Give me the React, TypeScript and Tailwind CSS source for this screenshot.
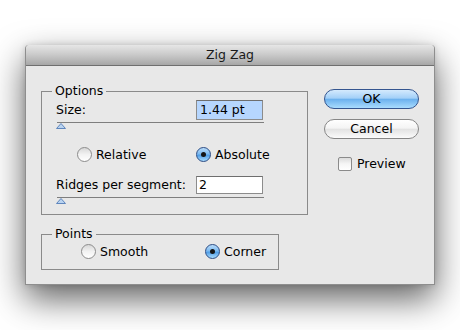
import React from "react";

function Radio({ checked, label }: { checked: boolean; label: string }) {
  return (
    <div className="flex items-center gap-[4px] h-[15px]">
      {checked ? (
        <span className="w-[15px] h-[15px] rounded-full border border-[#2b4c85] bg-[linear-gradient(to_bottom,#b9dcfa_0%,#7dbaf0_45%,#4f9de6_55%,#a6dafd_100%)] flex items-center justify-center shrink-0">
          <span className="w-[5px] h-[5px] rounded-full bg-[#151515]" />
        </span>
      ) : (
        <span className="w-[15px] h-[15px] rounded-full border border-[#8c8c8c] bg-[linear-gradient(to_bottom,#d8d8d8_0%,#f2f2f2_50%,#ffffff_100%)] shrink-0" />
      )}
      <span className="leading-[15px]">{label}</span>
    </div>
  );
}

function Slider() {
  return (
    <div className="flex flex-col">
      <div className="h-[1px] w-[207px] bg-[#7e7e7e] ml-[1px]" />
      <svg width="10" height="6" viewBox="0 0 10 6" className="block">
        <polygon points="5,0.5 9.5,5.5 0.5,5.5" fill="#b9d3f0" stroke="#5f86bd" strokeWidth="1" />
      </svg>
    </div>
  );
}

export default function App() {
  return (
    <div className="w-[460px] h-[330px] bg-white pt-[45px] pl-[25px] font-['DejaVu_Sans',sans-serif] text-[12.5px] text-black">
      <div className="w-[410px] h-[240px] flex flex-col bg-[#e8e8e8] rounded-t-[4px] border-x border-b border-[#8e8e8e] shadow-[0_14px_34px_rgba(0,0,0,0.62),0_0_6px_rgba(0,0,0,0.15)]">
        <div className="h-[21px] shrink-0 rounded-t-[4px] border-b border-[#6f6f6f] bg-[linear-gradient(to_bottom,#e6e6e6_0%,#c9c9c9_50%,#a7a7a7_100%)] flex items-center justify-center text-[12.5px] text-[#1a1a1a]">
          Zig Zag
        </div>
        <div className="flex flex-row">
          <div className="pl-[15px] pt-[25px] flex flex-col">
            <div className="relative w-[267px] border border-[#8a8a8a] pl-[14px] pt-[8px] pb-[10px] flex flex-col">
              <span className="absolute -top-[9px] left-[10px] h-[16px] leading-[16px] px-[3px] bg-[#e8e8e8]">
                Options
              </span>
              <div className="flex items-center h-[20px]">
                <span className="w-[140px]">Size:</span>
                <div className="w-[67px] h-[20px] border border-[#8c8c8c] border-t-[#6e6e6e] bg-[#b6d6fe] pl-[3px] flex items-center">
                  1.44 pt
                </div>
              </div>
              <div className="mt-[2px]">
                <Slider />
              </div>
              <div className="flex items-center mt-[18px]">
                <div className="w-[140px] pl-[21px]">
                  <Radio checked={false} label="Relative" />
                </div>
                <Radio checked={true} label="Absolute" />
              </div>
              <div className="flex items-center h-[18px] mt-[14px]">
                <span className="w-[140px]">Ridges per segment:</span>
                <div className="w-[67px] h-[18px] border border-[#8c8c8c] border-t-[#6e6e6e] bg-white pl-[2px] flex items-center">
                  2
                </div>
              </div>
              <div className="mt-[3px]">
                <Slider />
              </div>
            </div>
            <div className="relative mt-[19px] w-[238px] border border-[#8a8a8a] pl-[39px] pt-[9px] pb-[10px] flex items-center">
              <span className="absolute -top-[9px] left-[10px] h-[16px] leading-[16px] px-[3px] bg-[#e8e8e8]">
                Points
              </span>
              <div className="w-[124px]">
                <Radio checked={false} label="Smooth" />
              </div>
              <Radio checked={true} label="Corner" />
            </div>
          </div>
          <div className="ml-[16px] pt-[23px] flex flex-col">
            <button className="w-[95px] h-[20px] rounded-full border border-[#34558f] bg-[linear-gradient(to_bottom,#d4eafd_0%,#a3d0f8_45%,#6cb1ee_52%,#a9dcfe_100%)] flex items-center justify-center leading-none text-black">
              OK
            </button>
            <button className="mt-[10px] w-[95px] h-[20px] rounded-full border border-[#868686] bg-[linear-gradient(to_bottom,#ffffff_0%,#f4f4f4_45%,#e3e3e3_52%,#fbfbfb_100%)] flex items-center justify-center leading-none text-black">
              Cancel
            </button>
            <div className="mt-[16px] ml-[14px] flex items-center gap-[5px]">
              <span className="w-[14px] h-[14px] rounded-[2px] border border-[#8a8a8a] bg-[linear-gradient(to_bottom,#dcdcdc_0%,#f6f6f6_50%,#ffffff_100%)]" />
              <span>Preview</span>
            </div>
          </div>
        </div>
      </div>
    </div>
  );
}
